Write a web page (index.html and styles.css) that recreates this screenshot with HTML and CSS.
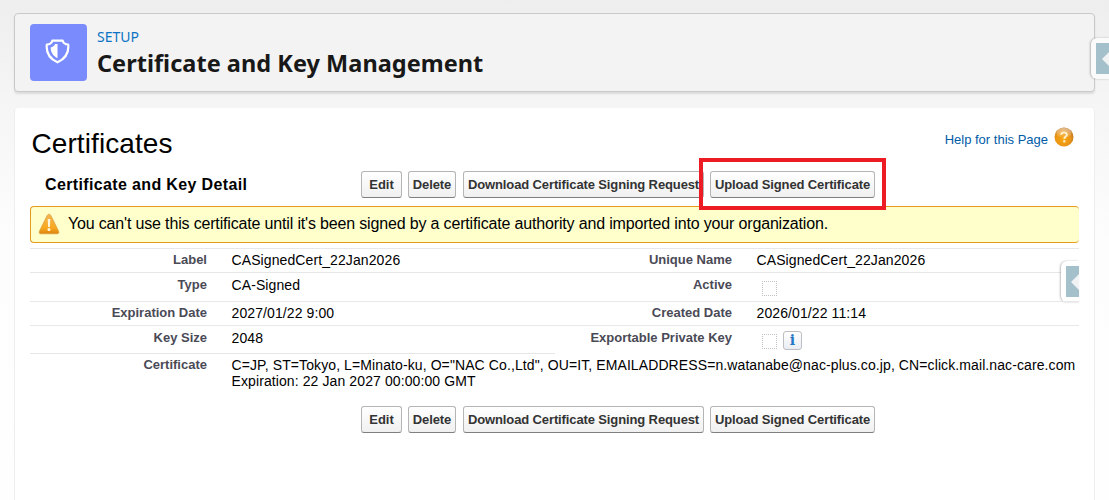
FILE: index.html
```html
<!DOCTYPE html>
<html lang="en">
<head>
<meta charset="utf-8">
<title>Certificate and Key Management</title>
<link rel="stylesheet" href="styles.css">
</head>
<body>
<div class="page">
  <header class="header">
    <div class="header-icon">
      <svg width="25" height="25" viewBox="0 0 25 25">
        <path d="M7.300 1.700H17.700C18.300 3.900 20.200 5.400 23.200 5.500C24.100 14 20.200 19.800 12.500 23.300C4.800 19.800 .9 14 1.800 5.500C4.800 5.400 6.700 3.900 7.300 1.700Z" fill="none" stroke="#fff" stroke-width="2.200" stroke-linejoin="round"/>
        <path d="M12.500 5V19.300C7.800 16.600 5.600 13 5.700 8.500C7.800 8 9.200 6.900 10.200 5Z" fill="#fff"/>
      </svg>
    </div>
    <div class="header-text">
      <div class="eyebrow">SETUP</div>
      <h1 class="title">Certificate and Key Management</h1>
    </div>
    <div class="side-tab side-tab-top"><div class="side-tab-face"></div></div>
  </header>

  <main class="content">
    <div class="content-head">
      <h2 class="heading">Certificates</h2>
      <a class="help"><span class="help-text">Help for this Page</span>
        <svg width="20" height="20" viewBox="0 0 20 20">
          <defs><radialGradient id="orb" cx=".45" cy=".6" r=".6"><stop offset="0" stop-color="#f9a70e"/><stop offset=".65" stop-color="#ea9516"/><stop offset="1" stop-color="#bd7426"/></radialGradient>
          <linearGradient id="shine" x1="0" y1="0" x2="0" y2="1"><stop offset="0" stop-color="#fff" stop-opacity=".5"/><stop offset="1" stop-color="#fff" stop-opacity=".05"/></linearGradient></defs>
          <circle cx="10" cy="10" r="9.500" fill="url(#orb)"/>
          <ellipse cx="10" cy="6" rx="7.500" ry="5" fill="url(#shine)"/>
          <path d="M7.200 7.700C7.300 4.600 12.900 4.600 12.900 7.700C12.900 9.600 10.300 9.600 10.300 12" fill="none" stroke="#fff0cc" stroke-width="2"/>
          <rect x="9.200" y="13.200" width="2.200" height="2.200" fill="#fff0cc"/>
        </svg>
      </a>
    </div>

    <div class="toolbar">
      <h3 class="subheading">Certificate and Key Detail</h3>
      <div class="buttons">
        <button class="btn btn-edit">Edit</button>
        <button class="btn btn-delete">Delete</button>
        <button class="btn btn-download">Download Certificate Signing Request</button>
        <div class="upload-wrap"><button class="btn btn-upload">Upload Signed Certificate</button><div class="highlight"></div></div>
      </div>
    </div>

    <div class="warning">
      <svg width="22" height="22" viewBox="0 0 22 22">
        <defs><linearGradient id="warn" x1="0" y1="0" x2="0" y2="1"><stop offset="0" stop-color="#f3b653"/><stop offset=".7" stop-color="#f8a81f"/><stop offset="1" stop-color="#dc820e"/></linearGradient></defs>
        <path d="M11 1.200C12 1.200 12.600 2 13 2.800L20.500 18C21.200 19.700 20.800 20.800 19.200 20.800H2.800C1.200 20.800 .8 19.700 1.500 18L9 2.800C9.400 2 10 1.200 11 1.200Z" fill="url(#warn)" stroke="#d99a3b" stroke-width=".7"/>
        <path d="M9.700 6H12.300L11.900 14H10.100Z" fill="#fff6dd"/><circle cx="11" cy="16.600" r="1.500" fill="#fff6dd"/>
      </svg>
      <span class="warning-text">You can't use this certificate until it's been signed by a certificate authority and imported into your organization.</span>
    </div>

    <div class="detail">
      <div class="row row-short"><span class="label">Label</span><span class="value">CASignedCert_22Jan2026</span><span class="label">Unique Name</span><span class="value">CASignedCert_22Jan2026</span></div>
      <div class="row row-tall"><span class="label">Type</span><span class="value">CA-Signed</span><span class="label">Active</span><span class="value checks"><i class="check"></i></span>
        <div class="side-tab side-tab-detail"><div class="side-tab-face"></div></div>
      </div>
      <div class="row row-short"><span class="label">Expiration Date</span><span class="value">2027/01/22 9:00</span><span class="label">Created Date</span><span class="value">2026/01/22 11:14</span></div>
      <div class="row row-key"><span class="label">Key Size</span><span class="value">2048</span><span class="label">Exportable Private Key</span><span class="value checks"><i class="check"></i><b class="info">i</b></span></div>
      <div class="row row-cert"><span class="label">Certificate</span><span class="value cert-value">C=JP, ST=Tokyo, L=Minato-ku, O="NAC Co.,Ltd", OU=IT, EMAILADDRESS=n.watanabe@nac-plus.co.jp, CN=click.mail.nac-care.com<br>Expiration: 22 Jan 2027 00:00:00 GMT</span></div>
    </div>

    <div class="buttons buttons-bottom">
      <button class="btn btn-edit">Edit</button>
      <button class="btn btn-delete">Delete</button>
      <button class="btn btn-download">Download Certificate Signing Request</button>
      <button class="btn btn-upload">Upload Signed Certificate</button>
    </div>
  </main>
</div>
</body>
</html>
```
FILE: styles.css
```css
* { box-sizing: border-box; }
body {
  margin: 0;
  font-family: "Liberation Sans", Arial, sans-serif;
  color: #000;
}
h1, h2, h3 { margin: 0; }
.page {
  height: 500px;
  padding: 13px 14px 0;
  overflow: hidden;
  background: linear-gradient(#eeeeee 0, #f5f5f5 100px, #fdfdfd 240px, #fefefe 100%);
}
.header {
  position: relative;
  display: flex;
  gap: 10px;
  width: 1081px;
  height: 79px;
  padding: 10px 15px;
  background: #f3f3f3;
  border: 1px solid #c9c9c9;
  border-radius: 4px;
  box-shadow: 0 2px 2px rgba(0, 0, 0, .1);
}
.header-icon {
  display: flex;
  align-items: center;
  justify-content: center;
  width: 57px;
  height: 57px;
  padding: 0 2px 2px 0;
  background: #7a8cfd;
  border-radius: 4px;
}
.header-text { font-family: "Noto Sans", sans-serif; white-space: nowrap; }
.eyebrow { padding-top: 3px; font-size: 14px; line-height: 20px; color: #0b74c4; }
.title { font-size: 23.500px; line-height: 32px; font-weight: 700; letter-spacing: .03px; color: #181818; }
.content {
  width: 1081px;
  height: 400px;
  margin-top: 16px;
  padding: 0 15px 0 16px;
  background: #fff;
  border: solid #eeeeee;
  border-width: 0 1px;
  border-radius: 4px 4px 0 0;
}
.content-head {
  display: flex;
  justify-content: space-between;
  height: 56px;
  padding: 19px 5px 0 .5px;
}
.heading { font-size: 28px; line-height: 34px; font-weight: 400; letter-spacing: .08px; }
.help { display: flex; gap: 6px; font-size: 13px; color: #015ba7; }
.help-text { padding-top: 5px; }
.toolbar { display: flex; height: 42px; }
.subheading { width: 330px; padding: 11px 0 0 14px; font-size: 16px; line-height: 19px; letter-spacing: .36px; white-space: nowrap; }
.buttons { display: flex; padding-top: 7px; }
.btn {
  flex: none;
  height: 27px;
  padding: 0;
  font: bold 13px/24px "Liberation Sans", Arial, sans-serif;
  letter-spacing: -.12px;
  color: #333;
  white-space: nowrap;
  text-align: center;
  background: linear-gradient(#fff, #f0f0f0);
  border: 1px solid #b5b5b5;
  border-bottom-color: #7f7f7f;
  border-radius: 3px;
}
.btn-edit { width: 41px; margin-right: 6px; letter-spacing: 0; }
.btn-delete { width: 48px; margin-right: 7px; }
.btn-download { width: 241px; margin-right: 6px; }
.btn-upload { width: 165px; }
.upload-wrap { position: relative; }
.highlight {
  position: absolute;
  top: -13px;
  left: -11px;
  width: 187px;
  height: 52px;
  border: 4px solid #ed1c24;
}
.warning {
  display: flex;
  align-items: center;
  gap: 8px;
  width: 1049px;
  height: 37px;
  margin-left: -1px;
  padding: 0 0 1px 7px;
  background: #ffffcc;
  border: 1px solid #e79a1c;
  border-right: 0;
  border-radius: 4px;
}
.warning-text { font-size: 16px; line-height: 20px; letter-spacing: -.165px; white-space: nowrap; }
.detail { width: 1049px; margin: 5px 0 0 -1px; }
.row {
  position: relative;
  display: grid;
  grid-template-columns: 177px 323px 202px 1fr;
  border-top: 1px solid #e7e7ea;
}
.row-short { height: 24px; }
.row-tall { height: 29px; }
.row-key { height: 28px; }
.row-cert { border-top-color: transparent; height: 53px; }
.row-cert::before {
  content: "";
  position: absolute;
  top: -1px;
  left: 0;
  width: 525px;
  height: 1px;
  background: #e7e7ea;
}
.label { padding-top: 3px; font-size: 13px; line-height: 16px; font-weight: 700; text-align: right; color: #4a4a56; }
.value { padding: 3px 0 0 24.500px; font-size: 14px; line-height: 17px; letter-spacing: .1px; white-space: nowrap; }
.row-tall .label, .row-tall .value { padding-top: 4px; }
.row-key .label, .row-key .value { padding-top: 4px; }
.row .cert-value { padding-top: 3px; line-height: 16px; }
.row .checks { display: flex; padding-left: 30px; }
.check { width: 15px; height: 15px; margin-top: 4px; border: 1px dotted #c0c0c0; }
.info {
  width: 19px;
  height: 19px;
  margin: 1px 0 0 6px;
  font: bold 14px/16px "DejaVu Serif", serif;
  text-align: center;
  color: #2478c6;
  background: linear-gradient(#fff, #e9edf2);
  border: 1px solid #bbbec3;
  border-radius: 3px;
}
.buttons-bottom { padding: 0 0 0 330px; }
.side-tab {
  position: absolute;
  width: 19px;
  height: 41px;
  padding: 5px 0 5px 5px;
  background: #fff;
  border-radius: 6px 0 0 6px;
  box-shadow: -1px 0 2px rgba(0, 0, 0, .25);
}
.side-tab-top { top: 24px; left: 1076px; background: #fafafa; }
.side-tab-detail { top: -12px; right: 0; width: 18px; }
.side-tab-face {
  display: flex;
  align-items: center;
  justify-content: flex-end;
  height: 31px;
  background: #a3c0cb;
}
.side-tab-face::before {
  content: "";
  border: solid transparent;
  border-width: 8px 8px 8px 0;
  border-right-color: #f0f2f4;
}
```
